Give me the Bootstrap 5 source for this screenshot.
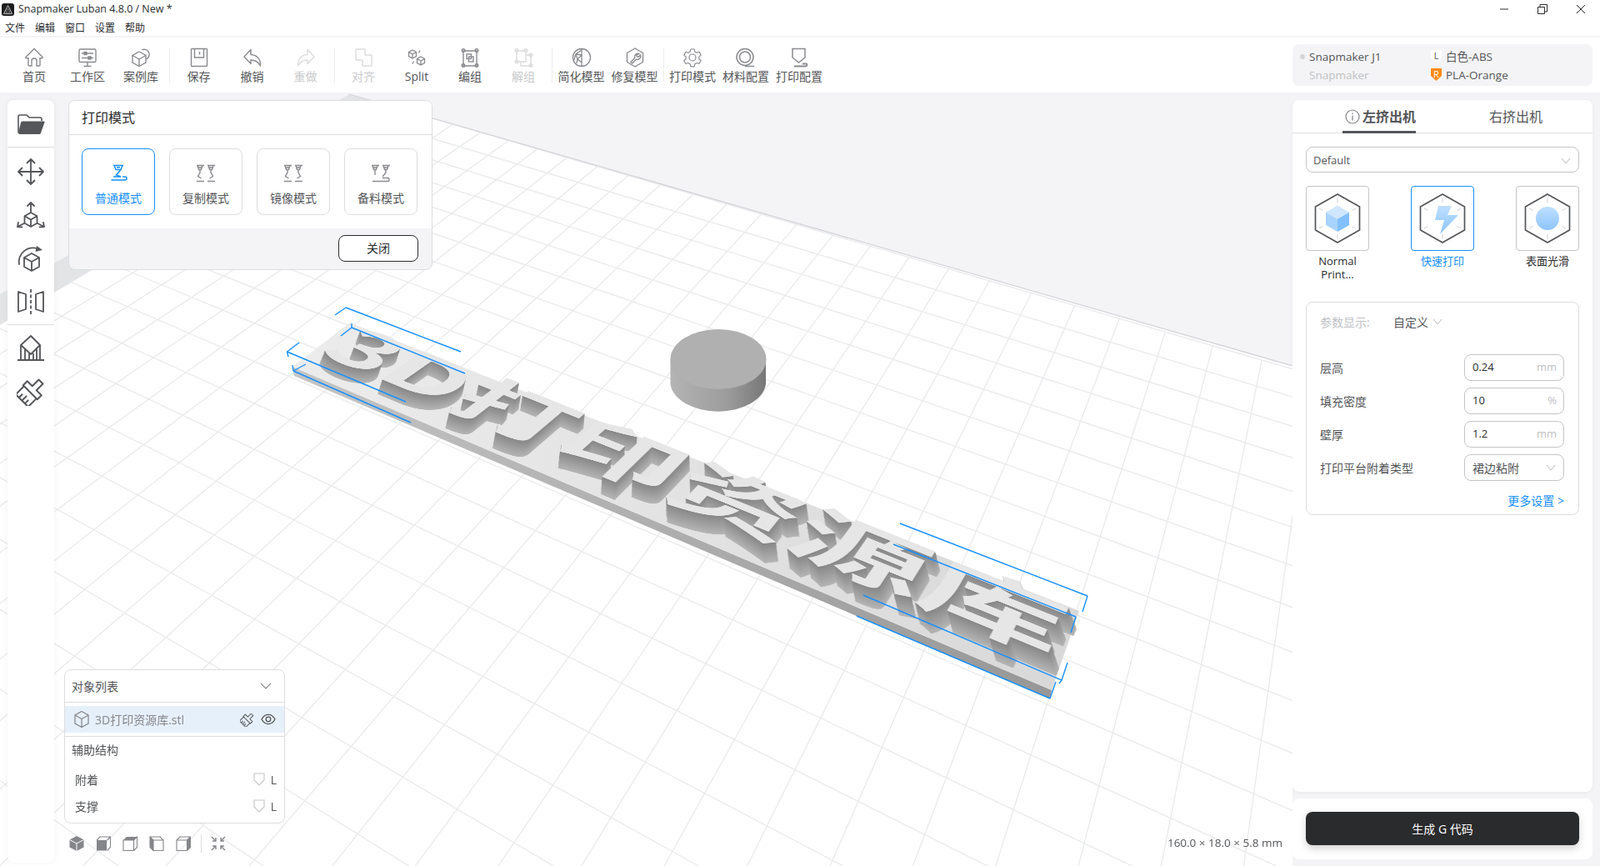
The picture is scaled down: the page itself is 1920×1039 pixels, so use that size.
<!DOCTYPE html>
<html lang="zh-CN">
<head>
    <meta charset="UTF-8">
    <title>Snapmaker Luban 4.8.0 / New *</title>
    <link rel="stylesheet" href="https://cdn.jsdelivr.net/npm/bootstrap@5.3.0/dist/css/bootstrap.min.css">
    <style>
        html, body { height: 100%; }
        body {
            background: #f4f4f6;
            color: #2a2c2e;
            font-family: "Open Sans", "Noto Sans CJK SC", sans-serif;
            font-size: 14px;
            overflow: hidden;
        }
        .app-shell { height: 1039px; }
        .title-row { height: 21px; font-size: 12.5px; padding: 1px 0 0 2px; }
        .title-row .app-logo { width: 15px; height: 15px; margin-right: 5px; }
        .win-ctrl { width: 46px; height: 20px; color: #2a2c2e; }
        .menu-row { height: 22px; font-size: 12px; padding: 3px 0 0 6px; gap: 12px; }
        .tool-row { height: 66px; margin-top: 2px; padding: 8px 9px 8px 9px; }
        .tool-item { width: 64px; padding-top: 4px; color: #545659; line-height: 20px; white-space: nowrap; }
        .tool-item svg { width: 24px; height: 24px; color: #8a8b8f; display: block; margin-bottom: 1px; }
        .tool-item.is-off { color: #c9cacc; }
        .tool-item.is-off svg { color: #dcdcde; }
        .tool-sep { width: 1px; height: 42px; background: #ececee; margin: 4px 2.5px 0 2px; }
        .machine-box { width: 360px; height: 50px; background: #f4f4f6; border-radius: 8px; font-size: 13.5px; color: #545659; padding: 1px 0 0 9px; }
        .machine-box .dot-off { width: 6px; height: 6px; border-radius: 50%; background: #d5d5d8; margin-right: 5px; }
        .machine-box .line-txt { height: 22px; line-height: 22px; }
        .machine-left { width: 156px; }
        .muted-txt { color: #c0c1c4; }
        .nozzle-tag { width: 15px; height: 17px; margin-right: 4px; }
        .work-row { height: 928px; }
        .scene-zone { width: 1551px; padding: 9px 12px 4px 9px; }
        .scene-svg { position: absolute; left: 0; top: 0; width: 1551px; height: 928px; }
        .model-text {
            position: absolute; left: 0; top: 0;
            font-family: "Noto Sans CJK SC", sans-serif;
            font-weight: 700; font-size: 200px; line-height: 200px;
            white-space: nowrap; color: #e6e6e6;
            transform-origin: 0 0;
        }
        .side-bar { width: 56px; height: 915px; border-radius: 8px; box-shadow: 0 0 8px rgba(0,0,0,.05); z-index: 2; position: relative; }
        .side-bar svg { width: 34px; height: 34px; color: #545659; display: block; }
        .side-group { padding: 11px 0; gap: 18px; }
        .side-group + .side-group { border-top: 1px solid #dcdde0; }
        .side-group.folder-group { height: 56px; padding: 0; }
        .side-group.tools-group { height: 213px; padding: 12px 0 0; gap: 18px; }
        .side-group.model-group { padding-top: 11px; }
        .float-col { z-index: 2; position: relative; }
        .mode-panel { width: 437px; margin-left: 17px; height: 204px; border: 1px solid #dcdde0; border-radius: 8px; overflow: hidden; background: #f4f4f6; }
        .mode-head { height: 41px; padding-left: 15px; font-size: 16px; color: #2a2c2e; border-bottom: 1px solid #dcdde0; line-height: 40px; background: #fff; }
        .mode-body { height: 112px; padding: 16px 15px; gap: 17px; background: #fff; }
        .mode-card { width: 88px; height: 80px; border: 1px solid #dcdde0; border-radius: 8px; color: #545659; padding-top: 17px; line-height: 20px; }
        .mode-card svg { width: 24px; height: 24px; color: #8a8b8f; margin-bottom: 8px; }
        .mode-card.is-on { border-color: #1890ff; color: #1890ff; }
        .mode-card.is-on svg { color: #1890ff; }
        .mode-foot { height: 49px; padding: 8px 16px 0 0; }
        .btn-close-mode { width: 96px; height: 32px; padding: 0; font-size: 14px; color: #2a2c2e; border: 1px solid #2a2c2e; border-radius: 8px; background: #fff; line-height: 30px; }
        .obj-panel { width: 265px; margin-left: 12px; height: 185px; border: 1px solid #dcdde0; border-radius: 8px; background: #fff; }
        .obj-head { height: 39px; padding: 0 15px 0 8px; border-bottom: 1px solid #dcdde0; margin-bottom: 4px; color: #545659; }
        .obj-row { height: 32px; background: #e6f0fb; padding: 0 10px 0 10px; color: #85868a; font-size: 14px; }
        .obj-row .cube-mini { margin-right: 6px; }
        .obj-aux { height: 36px; margin-top: 4px; padding-left: 8px; border-top: 1px solid #dcdde0; line-height: 32px; color: #545659; }
        .obj-sub { height: 32px; padding: 0 9px 0 12px; color: #545659; }
        .obj-sub .shield-mini { width: 14px; height: 16px; margin-right: 7px; }
        .view-row { margin-left: 12px; height: 28px; margin-top: 10px; margin-bottom: 9px; gap: 14px; padding-left: 6px; }
        .view-row svg { width: 18px; height: 18px; display: block; }
        .view-sep { width: 1px; height: 22px; background: #dcdde0; margin: 0 -3px 0 -2px; }
        .dim-txt { font-size: 13.5px; color: #545659; line-height: 18px; margin-bottom: 15px; white-space: nowrap; position: relative; z-index: 2; }
        .right-col { width: 369px; padding: 9px 9px 8px 0; gap: 8px; }
        .cfg-panel { flex: 1 1 auto; border-radius: 8px; box-shadow: 0 1px 4px rgba(0,0,0,.05); }
        .tab-row { height: 40px; border-bottom: 1px solid #dcdde0; font-size: 16px; color: #545659; }
        .tab-item { height: 40px; line-height: 40px; white-space: nowrap; }
        .tab-item.is-on { width: 88px; margin-left: 60px; padding-left: 24px; font-weight: 700; border-bottom: 3px solid #545659; position: relative; }
        .tab-item.is-on svg { position: absolute; left: 3px; top: 11px; width: 18px; height: 18px; color: #85868a; }
        .tab-right { margin-left: 88px; }
        .cfg-body { padding: 16px 16px 0; }
        .fake-select { height: 31px; padding: 2px 8px 0; border: 1px solid #c4c5c8; border-radius: 8px; font-size: 13px; color: #545659; }
        .chev-sm { width: 14px; height: 14px; color: #b9babd; }
        .preset-row { margin-top: 16px; height: 139px; }
        .preset-col { width: 76px; font-size: 13px; line-height: 16px; color: #2a2c2e; text-align: center; }
        .preset-box { width: 76px; height: 78px; border: 1px solid #c4c5c8; border-radius: 4px; margin-bottom: 4px; }
        .preset-box svg { width: 60px; height: 62px; }
        .preset-col.is-on { color: #1890ff; }
        .preset-col.is-on .preset-box { border-color: #1890ff; }
        .param-box { height: 256px; border: 1px solid #dcdde0; border-radius: 8px; padding: 11px 17px 0 16px; color: #545659; }
        .param-top { height: 24px; margin-bottom: 27px; font-size: 14px; }
        .param-top .top-label { width: 88px; color: #c0c1c4; }
        .param-top .top-val { color: #545659; margin-right: 4px; }
        .param-line { height: 32px; margin-bottom: 8px; font-size: 14px; }
        .param-input { width: 120px; height: 32px; border: 1px solid #c4c5c8; border-radius: 8px; padding: 0 8px 0 9px; color: #2a2c2e; font-size: 13px; }
        .param-input .unit-txt { color: #c0c1c4; }
        .param-sel-txt { font-size: 14px; color: #545659; }
        .more-link { color: #1890ff; font-size: 14px; text-align: right; margin-top: 14px; line-height: 20px; }
        .gen-panel { height: 73px; border-radius: 8px; padding: 16px; }
        .btn-gen { height: 40px; width: 100%; background: #2a2b2d; color: #fff; border: 0; border-radius: 8px; font-size: 14px; box-shadow: 0 4px 10px rgba(0,0,0,.18); padding: 0; }
        .icon-store { position: absolute; width: 0; height: 0; }
    </style>
</head>
<body>

<svg class="icon-store" aria-hidden="true">
    <defs>
        <symbol id="ic-home" viewBox="0 0 24 24"><path d="M12 1.5 22 11.5q.6 1.2-.8 1.3H19V21q0 1-1 1h-3v-6a3 3 0 0 0-6 0v6H6q-1 0-1-1v-8.200H2.800q-1.400-.1-.8-1.300Z" fill="none" stroke="currentColor" stroke-width="1.400"/></symbol>
        <symbol id="ic-bench" viewBox="0 0 24 24"><g fill="none" stroke="currentColor" stroke-width="1.400"><rect x="2" y="2" width="20" height="15.500" rx="1.500"/><path d="M5 7h14M5 12.500h14M12 17.500V22M7.500 22.500h9"/><rect x="8" y="5.500" width="3" height="3" fill="currentColor"/><rect x="13" y="11" width="3" height="3" fill="currentColor"/></g></symbol>
        <symbol id="ic-cases" viewBox="0 0 24 24"><g fill="none" stroke="currentColor" stroke-width="1.400"><path d="M10 5 18 9.500V18L10 22.500 2 18V9.500ZM2 9.500l8 4.500 8-4.500M10 14v8.500"/><path d="M13.500 2.800A6 6 0 0 1 18.500 14"/></g></symbol>
        <symbol id="ic-save" viewBox="0 0 24 24"><g fill="none" stroke="currentColor" stroke-width="1.400"><rect x="2.500" y="1.500" width="19" height="21" rx="1"/><path d="M6.500 1.500V12h11V1.500M12.500 5v3.500"/></g></symbol>
        <symbol id="ic-undo" viewBox="0 0 24 24"><path d="M10 2.500 2 11l8 8.500V15c5 0 8.500 1.500 11.500 7 .5-8-4-13-11.500-13.500Z" fill="none" stroke="currentColor" stroke-width="1.400" stroke-linejoin="round"/></symbol>
        <symbol id="ic-redo" viewBox="0 0 24 24"><path d="M14 2.500 22 11l-8 8.500V15c-5 0-8.500 1.500-11.500 7C2 14 6.500 9 14 8.500Z" fill="none" stroke="currentColor" stroke-width="1.400" stroke-linejoin="round"/></symbol>
        <symbol id="ic-align" viewBox="0 0 24 24"><path d="M3 2h11v7h8v13H11v-7H3Z" fill="none" stroke="currentColor" stroke-width="1.400" stroke-linejoin="round"/></symbol>
        <symbol id="ic-split" viewBox="0 0 24 24"><g fill="none" stroke="currentColor" stroke-width="1.300"><path d="M7 3l4.500 2.500v5L7 13l-4.500-2.500v-5ZM2.500 5.500 7 8l4.500-2.500M7 8v5"/><path d="M17 11l4.500 2.500v5L17 21l-4.500-2.500v-5ZM12.500 13.500 17 16l4.500-2.500M17 16v5"/><path d="M16 3.500l-1.500 3M8.500 16.500 7 19.500"/></g></symbol>
        <symbol id="ic-group" viewBox="0 0 24 24"><g fill="none" stroke="currentColor" stroke-width="1.400"><path d="M4 4h16v18H4Z"/><circle cx="4" cy="3.500" r="1.800"/><circle cx="20" cy="3.500" r="1.800"/><circle cx="4" cy="21.500" r="1.800"/><circle cx="20" cy="21.500" r="1.800"/><rect x="8" y="8" width="5.500" height="5.500"/><rect x="10.500" y="11" width="5.500" height="6"/></g></symbol>
        <symbol id="ic-ungroup" viewBox="0 0 24 24"><g fill="none" stroke="currentColor" stroke-width="1.400"><path d="M4 4h11v13H4ZM15 9h6v13H9v-5"/><circle cx="4" cy="3.500" r="1.800"/><circle cx="15" cy="3.500" r="1.800"/><circle cx="4" cy="17" r="1.800"/><circle cx="21" cy="9" r="1.800"/><circle cx="21" cy="21.500" r="1.800"/></g></symbol>
        <symbol id="ic-simplify" viewBox="0 0 24 24"><g fill="none" stroke="currentColor" stroke-width="1.300"><circle cx="12" cy="12" r="10.500"/><path d="M12 1.500v21M12 3 5 8l-2.500 8M5 8l2 6-1 5M7 14l5 4M7 14l5-5M12 9l-7-1"/></g></symbol>
        <symbol id="ic-repair" viewBox="0 0 24 24"><g fill="none" stroke="currentColor" stroke-width="1.400" stroke-linejoin="round"><path d="M12 1 21.500 6.500v11L12 23l-9.500-5.500v-11Z"/><path d="M17 7.500a4 4 0 0 0-5.200 5.100L7 17.400 8.700 19l4.800-4.800a4 4 0 0 0 5-5.200l-2.300 2.300-2-.5-.5-2Z"/></g></symbol>
        <symbol id="ic-gear" viewBox="0 0 24 24"><g fill="none" stroke="currentColor" stroke-width="1.200" stroke-linejoin="round"><path d="M9.800 2h4.400l.6 3 2.300 1.300 2.900-1 2.200 3.800-2.300 2 0 2.600 2.300 2-2.200 3.800-2.900-1-2.300 1.300-.6 3H9.800l-.6-3-2.300-1.300-2.900 1-2.200-3.800 2.300-2 0-2.600-2.300-2 2.200-3.800 2.900 1 2.300-1.300Z"/><circle cx="12" cy="12" r="4"/></g></symbol>
        <symbol id="ic-spool" viewBox="0 0 24 24"><g fill="none" stroke="currentColor" stroke-width="1.500"><circle cx="11" cy="11.500" r="10"/><circle cx="11" cy="11.500" r="6.500"/><path d="M11 22.500h11"/></g></symbol>
        <symbol id="ic-profile" viewBox="0 0 24 24"><g fill="none" stroke="currentColor" stroke-width="1.500"><path d="M4 1.500h15V12l-7.500 6L4 12Z"/><path d="M6 22.500h14a1.500 1.500 0 0 0 0-3h-4" stroke-width="1.800"/></g></symbol>
        <symbol id="ic-nozzle-one" viewBox="0 0 24 24"><g fill="none" stroke="currentColor" stroke-width="1.500"><path d="M6 2.500h12M7 2.500l2 5h6l2-5M10 4.800h4"/><path d="M15 7.500 9.500 14 15 16H6M18 20H3.500h16.500a2 2 0 0 0 0-4h-3"/></g></symbol>
        <symbol id="ic-nozzle-two" viewBox="0 0 24 24"><g fill="none" stroke="currentColor" stroke-width="1.400"><path d="M1 2.500h9M2 2.500l1.500 5h3l1.500-5M3 5h4M5 7.500V11l-2.500 4.500 4 2.500M1 21.500h9"/><path d="M14 2.500h9M15 2.500l1.500 5h3l1.500-5M16 5h4M18 7.500V11l2.500 4.500-4 2.500M14 21.500h9"/></g></symbol>
        <symbol id="ic-nozzle-back" viewBox="0 0 24 24"><g fill="none" stroke="currentColor" stroke-width="1.400"><path d="M1 2.500h9M2 2.500l1.500 5h3l1.500-5M3 5h4M5 7.500V14"/><path d="M14 2.500h9M15 2.500l1.500 5h3l1.500-5M16 5h4M18 7.500V11l-4 5"/><path d="M2 21.500h18a2 2 0 0 0 0-4h-6"/></g></symbol>
        <symbol id="ic-brush" viewBox="0 0 34 34"><g transform="rotate(45 17 17)" fill="none" stroke="currentColor" stroke-width="2" stroke-linejoin="round"><path d="M13.500 0h7v11h8.500v7H5v-7h8.500Z"/><path d="M6.500 18v14h21V18M12 32v-6M17 32v-8M22 32v-6"/></g></symbol>
        <symbol id="ic-hex" viewBox="0 0 60 62"><g fill="none"><path d="M30 2 56.500 17v28L30 60 3.500 45V17Z" stroke="#545659" stroke-width="1.700"/><path d="M30 6v6M30 50v6M8 19l4.500 2.500M47.500 40.500 52 43M52 19l-4.500 2.500M12.500 40.500 8 43" stroke="#d8d9db" stroke-width="1.200"/></g></symbol>
        <linearGradient id="blue-a" x1="0" y1="0" x2="0" y2="1"><stop offset="0" stop-color="#bfe0ff"/><stop offset="1" stop-color="#8cc4ff"/></linearGradient>
    </defs>
</svg>

<div class="app-shell d-flex flex-column">

    <div class="title-row d-flex align-items-center bg-white">
        <svg class="app-logo" viewBox="0 0 15 15"><rect width="15" height="15" rx="3" fill="#1d1d1f"/><path d="M7.500 2.500 12.500 12.500H2.500Z" fill="none" stroke="#bdbdbd" stroke-width="1"/><path d="M7.500 6 10 11H5Z" fill="none" stroke="#8c8c8c" stroke-width=".8"/></svg>
        <span>Snapmaker Luban 4.8.0 / New *</span>
        <div class="ms-auto d-flex">
            <div class="win-ctrl d-flex align-items-center justify-content-center"><svg width="12" height="12" viewBox="0 0 12 12"><path d="M1 6h10" stroke="currentColor"/></svg></div>
            <div class="win-ctrl d-flex align-items-center justify-content-center"><svg width="12" height="12" viewBox="0 0 12 12"><path d="M.5 3.500h8v8h-8ZM3 3.500V.5h8.500V9H8.500" fill="none" stroke="currentColor"/></svg></div>
            <div class="win-ctrl d-flex align-items-center justify-content-center"><svg width="12" height="12" viewBox="0 0 12 12"><path d="M1 1l10 10M11 1 1 11" stroke="currentColor"/></svg></div>
        </div>
    </div>

    <div class="menu-row d-flex align-items-center bg-white">
        <span>文件</span><span>编辑</span><span>窗口</span><span>设置</span><span>帮助</span>
    </div>

    <div class="tool-row d-flex bg-white">
        <div class="tool-item d-flex flex-column align-items-center"><svg><use href="#ic-home"/></svg>首页</div>
        <div class="tool-item d-flex flex-column align-items-center"><svg><use href="#ic-bench"/></svg>工作区</div>
        <div class="tool-item d-flex flex-column align-items-center"><svg><use href="#ic-cases"/></svg>案例库</div>
        <div class="tool-sep"></div>
        <div class="tool-item d-flex flex-column align-items-center"><svg><use href="#ic-save"/></svg>保存</div>
        <div class="tool-item d-flex flex-column align-items-center"><svg><use href="#ic-undo"/></svg>撤销</div>
        <div class="tool-item is-off d-flex flex-column align-items-center"><svg><use href="#ic-redo"/></svg>重做</div>
        <div class="tool-sep"></div>
        <div class="tool-item is-off d-flex flex-column align-items-center"><svg><use href="#ic-align"/></svg>对齐</div>
        <div class="tool-item d-flex flex-column align-items-center"><svg><use href="#ic-split"/></svg>Split</div>
        <div class="tool-item d-flex flex-column align-items-center"><svg><use href="#ic-group"/></svg>编组</div>
        <div class="tool-item is-off d-flex flex-column align-items-center"><svg><use href="#ic-ungroup"/></svg>解组</div>
        <div class="tool-sep"></div>
        <div class="tool-item d-flex flex-column align-items-center"><svg><use href="#ic-simplify"/></svg>简化模型</div>
        <div class="tool-item d-flex flex-column align-items-center"><svg><use href="#ic-repair"/></svg>修复模型</div>
        <div class="tool-sep"></div>
        <div class="tool-item d-flex flex-column align-items-center"><svg><use href="#ic-gear"/></svg>打印模式</div>
        <div class="tool-item d-flex flex-column align-items-center"><svg><use href="#ic-spool"/></svg>材料配置</div>
        <div class="tool-item d-flex flex-column align-items-center"><svg><use href="#ic-profile"/></svg>打印配置</div>

        <div class="machine-box ms-auto d-flex align-items-center">
            <div class="machine-left d-flex">
                <div class="dot-off mt-2"></div>
                <div>
                    <div class="line-txt">Snapmaker J1</div>
                    <div class="line-txt muted-txt">Snapmaker</div>
                </div>
            </div>
            <div>
                <div class="line-txt d-flex align-items-center">
                    <svg class="nozzle-tag" viewBox="0 0 15 17"><path d="M1 1h13v9l-6.500 6L1 10Z" fill="#fff"/><text x="7.500" y="12" text-anchor="middle" font-size="11" font-family="Open Sans" fill="#545659">L</text></svg>白色-ABS
                </div>
                <div class="line-txt d-flex align-items-center">
                    <svg class="nozzle-tag" viewBox="0 0 15 17"><path d="M1 1h13v9l-6.500 6L1 10Z" fill="#ff8a14"/><text x="7.500" y="12" text-anchor="middle" font-size="11" font-family="Open Sans" fill="#fff">R</text></svg>PLA-Orange
                </div>
            </div>
        </div>
    </div>

    <div class="work-row d-flex">
        <div class="scene-zone position-relative d-flex">
            <svg class="scene-svg" id="scene" viewBox="0 111 1551 928"></svg>
            <div class="model-text" id="modelText">3D打印资源库</div>
            <svg class="scene-svg" id="sceneMarks" viewBox="0 111 1551 928"></svg>

            <div class="side-bar bg-white d-flex flex-column align-items-center flex-shrink-0">
                <div class="side-group folder-group w-100 d-flex justify-content-center align-items-center">
                    <svg viewBox="0 0 34 34"><path d="M2 9a2 2 0 0 1 2-2h8l3 3h13a2 2 0 0 1 2 2v2" fill="none" stroke="currentColor" stroke-width="1.600"/><path d="M2 9v18a2 2 0 0 0 .5 1.500" fill="none" stroke="currentColor" stroke-width="1.600"/><path d="M7 14.500h25.500a1 1 0 0 1 1 1.300L29 28.500a2 2 0 0 1-2 1.500H4a2 2 0 0 1-1.800-2.500L5 16a2 2 0 0 1 2-1.500Z" fill="currentColor"/></svg>
                </div>
                <div class="side-group tools-group w-100 d-flex flex-column align-items-center">
                    <svg viewBox="0 0 34 34"><g fill="none" stroke="currentColor" stroke-width="1.800" stroke-linecap="round" stroke-linejoin="round"><path d="M17 2v30M2 17h30M12.500 6.500 17 2l4.500 4.500M12.500 27.500 17 32l4.500-4.500M6.500 12.500 2 17l4.500 4.500M27.500 12.500 32 17l-4.500 4.500"/></g></svg>
                    <svg viewBox="0 0 34 34"><g fill="none" stroke="currentColor" stroke-width="1.800" stroke-linecap="round" stroke-linejoin="round"><path d="M17 14l7.500 4.200v8.600L17 31l-7.500-4.200v-8.600ZM9.500 18.200 17 22.500l7.500-4.300M17 22.500V31"/><path d="M17 14V2M13 6l4-4 4 4M9.500 26.800 1 31M2 26l-1 5 5.500.5M24.500 26.800 33 31M32 26l1 5-5.500.5"/></g></svg>
                    <svg viewBox="0 0 34 34"><g fill="none" stroke="currentColor" stroke-width="1.800" stroke-linejoin="round"><path d="M18 11l9 5v11l-9 5-9-5V16ZM9 16l9 5 9-5M18 21v11"/><path d="M3 24C1 12 12 1 26 5.500" stroke-linecap="round"/></g><path d="M24 2l7 5-8.500 2Z" fill="currentColor"/></svg>
                    <svg viewBox="0 0 34 34"><g fill="none" stroke="currentColor" stroke-width="1.800" stroke-linejoin="round"><path d="M2 5l9 3v18l-9 3ZM32 5l-9 3v18l9 3Z"/><path d="M17 2v30" stroke-dasharray="4 2.500"/></g></svg>
                </div>
                <div class="side-group model-group w-100 d-flex flex-column align-items-center">
                    <svg viewBox="0 0 34 34"><g fill="none" stroke="currentColor" stroke-width="1.800" stroke-linejoin="round"><path d="M1 31h32M5 31V13L17 2l11 11v18"/><path d="M5 13l12 11 11-11M10 18v13M15 23v8M20 23v8M24 18v13"/></g></svg>
                    <svg><use href="#ic-brush"/></svg>
                </div>
            </div>

            <div class="float-col flex-fill d-flex flex-column justify-content-between">
                <div class="mode-panel">
                    <div class="mode-head">打印模式</div>
                    <div class="mode-body d-flex">
                        <div class="mode-card is-on d-flex flex-column align-items-center"><svg><use href="#ic-nozzle-one"/></svg>普通模式</div>
                        <div class="mode-card d-flex flex-column align-items-center"><svg><use href="#ic-nozzle-two"/></svg>复制模式</div>
                        <div class="mode-card d-flex flex-column align-items-center"><svg><use href="#ic-nozzle-two"/></svg>镜像模式</div>
                        <div class="mode-card d-flex flex-column align-items-center"><svg><use href="#ic-nozzle-back"/></svg>备料模式</div>
                    </div>
                    <div class="mode-foot d-flex justify-content-end"><button type="button" class="btn btn-close-mode">关闭</button></div>
                </div>

                <div class="d-flex justify-content-between align-items-end">
                    <div>
                        <div class="obj-panel">
                            <div class="obj-head d-flex align-items-center justify-content-between">
                                <span>对象列表</span>
                                <svg width="14" height="14" viewBox="0 0 14 14"><path d="M1 4l6 6 6-6" fill="none" stroke="#85868a" stroke-width="1.100"/></svg>
                            </div>
                            <div class="obj-row d-flex align-items-center">
                                <svg class="cube-mini" width="20" height="22" viewBox="0 0 20 22"><path d="M10 1.500l8 4.500v10l-8 4.500L2 16V6ZM2 6l8 4.500L18 6M10 10.500v10" fill="none" stroke="#8a8b8f" stroke-width="1.300"/></svg>
                                <span class="flex-fill">3D打印资源库.stl</span>
                                <svg class="me-2" width="17" height="17" color="#545659"><use href="#ic-brush"/></svg>
                                <svg width="18" height="14" viewBox="0 0 18 14"><path d="M1 7c4-7.500 12-7.500 16 0-4 7.500-12 7.500-16 0Z" fill="none" stroke="#545659" stroke-width="1.300"/><circle cx="9" cy="7" r="2.800" fill="none" stroke="#545659" stroke-width="1.300"/></svg>
                            </div>
                            <div class="obj-aux">辅助结构</div>
                            <div class="obj-sub d-flex align-items-center justify-content-between">
                                <span>附着</span>
                                <span class="d-flex align-items-center"><svg class="shield-mini" viewBox="0 0 14 16"><path d="M1 1h12v8l-6 6-6-6Z" fill="none" stroke="#c4c5c8" stroke-width="1.100"/></svg>L</span>
                            </div>
                            <div class="obj-sub d-flex align-items-center justify-content-between">
                                <span>支撑</span>
                                <span class="d-flex align-items-center"><svg class="shield-mini" viewBox="0 0 14 16"><path d="M1 1h12v8l-6 6-6-6Z" fill="none" stroke="#c4c5c8" stroke-width="1.100"/></svg>L</span>
                            </div>
                        </div>
                        <div class="view-row d-flex align-items-center">
                            <svg viewBox="0 0 18 18"><path d="M9 0 17.500 4.500v9L9 18 .5 13.500v-9Z" fill="#85868a"/><path d="M.5 4.500 9 9l8.500-4.500M9 9v9" stroke="#fff" fill="none"/></svg>
                            <svg viewBox="0 0 18 18"><path d="M1 5h12v12.500H1Z" fill="#85868a"/><path d="M1 5l4-4h12.500v12.500l-4 4M13.500 5l4-4" fill="none" stroke="#85868a" stroke-width="1.100"/></svg>
                            <svg viewBox="0 0 18 18"><path d="M1 5l4-4h12.500l-4 4Z" fill="#85868a"/><path d="M1 5h12.500v12.500H1ZM13.500 5l4-4v12.500l-4 4" fill="none" stroke="#85868a" stroke-width="1.100"/></svg>
                            <svg viewBox="0 0 18 18"><path d="M1 1l4 4v12.500l-4-4Z" fill="#85868a"/><path d="M1 1h12l4 4v12.500H5V5h12M5 5 1 1v12.500l4 4" fill="none" stroke="#85868a" stroke-width="1.100"/></svg>
                            <svg viewBox="0 0 18 18"><path d="M13.500 5l4-4v12.500l-4 4Z" fill="#85868a"/><path d="M1 5h12.500v12.500H1ZM1 5l4-4h12.500v12.500l-4 4M13.500 5l4-4" fill="none" stroke="#85868a" stroke-width="1.100"/></svg>
                            <div class="view-sep"></div>
                            <svg viewBox="0 0 18 18"><path d="M1 1l5 5M6 2v4H2M17 1l-5 5M12 2v4h4M1 17l5-5M6 16v-4H2M17 17l-5-5M12 16v-4h4" fill="none" stroke="#85868a" stroke-width="1.400"/></svg>
                        </div>
                    </div>
                    <div class="dim-txt">160.0 × 18.0 × 5.8 mm</div>
                </div>
            </div>
        </div>

        <div class="right-col flex-fill d-flex flex-column">
            <div class="cfg-panel bg-white">
                <div class="tab-row d-flex">
                    <div class="tab-item is-on">
                        <svg viewBox="0 0 18 18"><circle cx="9" cy="9" r="8" fill="none" stroke="currentColor" stroke-width="1.200"/><path d="M9 7.500v6M9 4.500v1.500" stroke="currentColor" stroke-width="1.300"/></svg>左挤出机
                    </div>
                    <div class="tab-item tab-right">右挤出机</div>
                </div>
                <div class="cfg-body">
                    <div class="fake-select d-flex align-items-center justify-content-between">
                        <span>Default</span>
                        <svg class="chev-sm" viewBox="0 0 14 14"><path d="M2 4l5 6 5-6" fill="none" stroke="currentColor"/></svg>
                    </div>
                    <div class="preset-row d-flex justify-content-between">
                        <div class="preset-col">
                            <div class="preset-box d-flex align-items-center justify-content-center">
                                <svg viewBox="0 0 60 62"><use href="#ic-hex"/><path d="M30 16 44 24v15l-14 8-14-8V24Z" fill="#a8d3ff"/><path d="M30 16 44 24 30 32 16 24Z" fill="#cfe7ff"/><path d="M30 32 44 24v15l-14 8Z" fill="#82c0ff"/></svg>
                            </div>
                            Normal<br>Print...
                        </div>
                        <div class="preset-col is-on">
                            <div class="preset-box d-flex align-items-center justify-content-center">
                                <svg viewBox="0 0 60 62"><use href="#ic-hex"/><path d="M25 16h16l-5 11h13L27 50l5-17H21Z" fill="url(#blue-a)"/></svg>
                            </div>
                            快速打印
                        </div>
                        <div class="preset-col">
                            <div class="preset-box d-flex align-items-center justify-content-center">
                                <svg viewBox="0 0 60 62"><use href="#ic-hex"/><circle cx="30" cy="31" r="14" fill="url(#blue-a)"/></svg>
                            </div>
                            表面光滑
                        </div>
                    </div>
                    <div class="param-box">
                        <div class="param-top d-flex align-items-center">
                            <span class="top-label">参数显示:</span><span class="top-val">自定义</span>
                            <svg class="chev-sm" viewBox="0 0 14 14"><path d="M2 4l5 6 5-6" fill="none" stroke="currentColor"/></svg>
                        </div>
                        <div class="param-line d-flex align-items-center justify-content-between">
                            <span>层高</span>
                            <div class="param-input d-flex align-items-center justify-content-between"><span>0.24</span><span class="unit-txt">mm</span></div>
                        </div>
                        <div class="param-line d-flex align-items-center justify-content-between">
                            <span>填充密度</span>
                            <div class="param-input d-flex align-items-center justify-content-between"><span>10</span><span class="unit-txt">%</span></div>
                        </div>
                        <div class="param-line d-flex align-items-center justify-content-between">
                            <span>壁厚</span>
                            <div class="param-input d-flex align-items-center justify-content-between"><span>1.2</span><span class="unit-txt">mm</span></div>
                        </div>
                        <div class="param-line d-flex align-items-center justify-content-between">
                            <span>打印平台附着类型</span>
                            <div class="param-input d-flex align-items-center justify-content-between"><span class="param-sel-txt">裙边粘附</span><svg class="chev-sm" viewBox="0 0 14 14"><path d="M2 4l5 6 5-6" fill="none" stroke="currentColor"/></svg></div>
                        </div>
                        <div class="more-link">更多设置 &gt;</div>
                    </div>
                </div>
            </div>
            <div class="gen-panel bg-white">
                <button type="button" class="btn btn-gen">生成 G 代码</button>
            </div>
        </div>
    </div>
</div>

<script>
    // bed grid from two vanishing points, measured off the reference
    var P = [419, 113], VA = [-2200, -650], VB = [1726, -633];
    var stepU = 0.01134, stepV = 0.02;
    var SVGNS = "http://www.w3.org/2000/svg";
    var scene = document.getElementById("scene");

    function project(u, v) {
        var s = u * stepU, q = v * stepV, w = 1 - s - q;
        return [(P[0] - s * VA[0] - q * VB[0]) / w, (P[1] - s * VA[1] - q * VB[1]) / w];
    }
    function add(tag, attrs, parent) {
        var el = document.createElementNS(SVGNS, tag);
        for (var k in attrs) el.setAttribute(k, attrs[k]);
        (parent || scene).appendChild(el);
        return el;
    }

    var defs = add("defs", {});
    var clip = add("clipPath", { id: "floor-clip" }, defs);
    add("polygon", { points: "449,122 1551,439 1551,1039 0,1039 0,390" }, clip);
    var slabG = add("linearGradient", { id: "slab-top", x1: 0, y1: 0, x2: 1, y2: 0 }, defs);
    add("stop", { offset: 0, "stop-color": "#ececec" }, slabG);
    add("stop", { offset: 1, "stop-color": "#d8d8d8" }, slabG);
    var sideG = add("linearGradient", { id: "slab-side", x1: 0, y1: 0, x2: 1, y2: 0 }, defs);
    add("stop", { offset: 0, "stop-color": "#c4c4c4" }, sideG);
    add("stop", { offset: 1, "stop-color": "#979797" }, sideG);
    var cylG = add("linearGradient", { id: "cyl-side", x1: 0, y1: 0, x2: 1, y2: 0 }, defs);
    add("stop", { offset: 0, "stop-color": "#b4b4b4" }, cylG);
    add("stop", { offset: 0.6, "stop-color": "#9c9c9c" }, cylG);
    add("stop", { offset: 1, "stop-color": "#777777" }, cylG);

    // wall of the bed, then the white floor
    add("polygon", { points: "419,113 449,122 0,390 0,353", fill: "#e3e4e6" });
    add("polygon", { points: "449,122 1551,439 1551,1039 0,1039 0,390", fill: "#ffffff" });

    var grid = add("g", { stroke: "#e9eaec", "stroke-width": 1.3, "clip-path": "url(#floor-clip)" });
    for (var u = 0; u <= 40; u++) {
        var a = project(u, 0), b = project(u, 26);
        add("line", { x1: a[0], y1: a[1], x2: b[0], y2: b[1] }, grid);
    }
    for (var v = 0; v <= 28; v++) {
        var c = project(0, v), d = project(40, v);
        add("line", { x1: c[0], y1: c[1], x2: d[0], y2: d[1] }, grid);
    }
    add("line", { x1: 419, y1: 113, x2: 1551, y2: 439, stroke: "#d3d4d8", "stroke-width": 1.3 });

    // cylinder
    add("path", { d: "M804.500 431 V461 A57.500 36 0 0 0 919 461 V431 Z", fill: "url(#cyl-side)" });
    add("ellipse", { cx: 862, cy: 431, rx: 57.5, ry: 36, fill: "#b0b0b0" });

    // slab under the letters
    add("polygon", { points: "351,440 1262,828 1260,838 353,451", fill: "url(#slab-side)" });
    add("polygon", { points: "420,387 1295,733 1262,828 351,440", fill: "url(#slab-top)" });

    // extruded lettering on the slab: real text, homography through matrix3d
    function solveQuad(w, h, q) {
        var dx1 = q[1][0] - q[2][0], dx2 = q[3][0] - q[2][0], sx = q[0][0] - q[1][0] + q[2][0] - q[3][0];
        var dy1 = q[1][1] - q[2][1], dy2 = q[3][1] - q[2][1], sy = q[0][1] - q[1][1] + q[2][1] - q[3][1];
        var det = dx1 * dy2 - dx2 * dy1;
        var g = (sx * dy2 - dx2 * sy) / det, k = (dx1 * sy - sx * dy1) / det;
        var m = [
            q[1][0] - q[0][0] + g * q[1][0], q[3][0] - q[0][0] + k * q[3][0], q[0][0],
            q[1][1] - q[0][1] + g * q[1][1], q[3][1] - q[0][1] + k * q[3][1], q[0][1],
            g, k, 1
        ];
        return [m[0] / w, m[1] / h, m[2], m[3] / w, m[4] / h, m[5], m[6] / w, m[7] / h, m[8]];
    }
    function applyH(m, x, y) {
        var w = m[6] * x + m[7] * y + m[8];
        return [(m[0] * x + m[1] * y + m[2]) / w, (m[3] * x + m[4] * y + m[5]) / w];
    }

    var lift = 20;
    var quad = [[445, 383], [1295, 719], [1262, 794], [376, 426]];
    var mt = document.getElementById("modelText");
    var W = mt.offsetWidth, H = mt.offsetHeight;
    var M = solveQuad(W, H, quad.map(function (p) { return [p[0], p[1] - 111]; }));
    mt.style.transform = "matrix3d(" + [M[0], M[3], 0, M[6], M[1], M[4], 0, M[7], 0, 0, 1, 0, M[2], M[5], 0, M[8]].join(",") + ")";

    // local offset giving a step of one screen pixel downwards, at the middle of the box
    var c0 = applyH(M, W / 2, H / 2);
    var ex = applyH(M, W / 2 + 1, H / 2), ey = applyH(M, W / 2, H / 2 + 1);
    var a11 = ex[0] - c0[0], a12 = ey[0] - c0[0], a21 = ex[1] - c0[1], a22 = ey[1] - c0[1];
    var dt = a11 * a22 - a12 * a21;
    var ox = -a12 / dt, oy = a11 / dt;
    var shadows = [];
    for (var i = 1; i <= lift * 2; i++) {
        var t = i / (lift * 2), g = Math.round(135 + 45 * t);
        shadows.push((ox * i / 2).toFixed(2) + "px " + (oy * i / 2).toFixed(2) + "px 0 rgb(" + g + "," + g + "," + g + ")");
    }
    mt.style.textShadow = shadows.join(",");

    // blue bounding marks
    var marks = [
        [415,369,553,422],[415,369,402,378],
        [422,393,558,448],[422,393,409,403],[422,393,422,388],
        [344.5,422,487,482],[344.5,422,359,411],[344.5,422,346,428],
        [352,445,493,507],[352,445,367,437],[352,445,351,438],
        [1080,628,1305,715],[1305,715,1299,734],
        [1072,653,1291,740],[1291,740,1285,759],
        [1036,714,1274,816],[1274,816,1281,795],[1274,816,1271,820],
        [1028,739,1260,838],[1260,838,1267,818]
    ];
    var blue = add("g", { stroke: "#1890ff", "stroke-width": 1.4 }, document.getElementById("sceneMarks"));
    marks.forEach(function (l) {
        add("line", { x1: l[0], y1: l[1], x2: l[2], y2: l[3] }, blue);
    });
</script>

</body>
</html>
